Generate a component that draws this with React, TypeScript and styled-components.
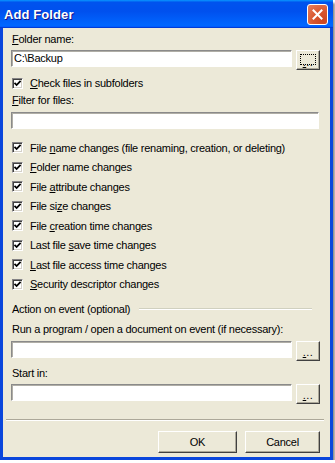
import React from "react";
import styled, { createGlobalStyle } from "styled-components";

const GlobalStyle = createGlobalStyle`
  html, body { margin: 0; padding: 0; background: #ffffff; }
  body { font-family: "Liberation Sans", Arial, sans-serif; }
`;

const Window = styled.div`
  width: 333px;
  height: 460px;
  display: flex;
  flex-direction: column;
  background: #0a46dc;
  box-shadow: 2px 3px 2px rgba(0, 0, 0, 0.45);
`;

const TitleBar = styled.div`
  flex: none;
  height: 28px;
  display: flex;
  align-items: center;
  justify-content: space-between;
  padding: 0 5px 0 4px;
  background: linear-gradient(
    180deg,
    #0997ff,
    #0053ee 8%,
    #0050ee 40%,
    #0066ff 88%,
    #0066ff 93%,
    #005bff 95%,
    #003dd7 96%,
    #003dd7
  );
`;

const Title = styled.span`
  color: #ffffff;
  font: bold 13px "Liberation Sans", Arial, sans-serif;
  text-shadow: 1px 1px 0 #0f1089;
  letter-spacing: 0.1px;
`;

const CloseButton = styled.div`
  width: 21px;
  height: 21px;
  box-sizing: border-box;
  border: 1px solid #ffffff;
  border-radius: 3px;
  background: radial-gradient(circle at 80% 85%, #cc4622 0%, #d8562f 45%, #e7805f 100%);
  display: flex;
  align-items: center;
  justify-content: center;
`;

const Body = styled.div`
  flex: 1;
  margin: 0 3px 3px;
  background: #ece9d8;
  padding: 0 10px 0 8px;
  display: flex;
  flex-direction: column;
  font-size: 11px;
  letter-spacing: -0.25px;
  color: #000000;
`;

const Label = styled.div<{ $mt: number }>`
  margin-top: ${(p) => p.$mt}px;
  margin-left: 1px;
  height: 13px;
  line-height: 13px;
  white-space: nowrap;
`;

const U = styled.span`
  text-decoration: underline;
`;

const FieldRow = styled.div<{ $mt: number }>`
  margin-top: ${(p) => p.$mt}px;
  display: flex;
  align-items: flex-start;
  gap: 4px;
`;

const TextBox = styled.div<{ $mt?: number; $full?: boolean }>`
  margin-top: ${(p) => p.$mt ?? 0}px;
  box-sizing: border-box;
  height: 17px;
  width: ${(p) => (p.$full ? "308px" : "281px")};
  background: #ffffff;
  border-style: solid;
  border-width: 1px;
  border-color: #8a8a8a #ffffff #ffffff #8a8a8a;
  box-shadow: inset 1px 1px 0 #b0aea6;
  padding: 0 2px;
  line-height: 14px;
  white-space: nowrap;
`;

const RaisedButton = styled.div<{ $w: number; $h: number }>`
  box-sizing: border-box;
  width: ${(p) => p.$w}px;
  height: ${(p) => p.$h}px;
  background: #ece9d8;
  border-style: solid;
  border-width: 1px;
  border-color: #ffffff #404040 #404040 #ffffff;
  box-shadow: inset -1px -1px 0 #aca899;
  display: flex;
  align-items: center;
  justify-content: center;
  position: relative;
`;

const Dots = styled.span`
  font-size: 11px;
  line-height: 12px;
  margin-top: 3px;
  letter-spacing: 0.5px;
`;

const FocusRect = styled.div`
  position: absolute;
  inset: 3px 3px 4px 3px;
  border: 1px dotted #000000;
`;

const CheckRow = styled.div<{ $mt?: number; $h?: number }>`
  margin-top: ${(p) => p.$mt ?? 0}px;
  height: ${(p) => p.$h ?? 19.5}px;
  display: flex;
  align-items: center;
  gap: 7px;
  padding-left: 1px;
  white-space: nowrap;
`;

const CheckList = styled.div<{ $mt: number }>`
  margin-top: ${(p) => p.$mt}px;
  display: flex;
  flex-direction: column;
`;

const Box = styled.div`
  flex: none;
  width: 11px;
  height: 11px;
  box-sizing: border-box;
  background: #ffffff;
  border-style: solid;
  border-width: 1px;
  border-color: #848284 #ffffff #ffffff #848284;
  box-shadow: inset 1px 1px 0 #404040, inset -1px -1px 0 #d4d0c8;
  display: flex;
  align-items: center;
  justify-content: center;
`;

const GroupHeader = styled.div<{ $mt: number }>`
  margin-top: ${(p) => p.$mt}px;
  height: 14px;
  display: flex;
  align-items: center;
  gap: 9px;
  padding-left: 1px;
  padding-right: 8px;
  white-space: nowrap;
`;

const EtchedLine = styled.div`
  flex: 1;
  height: 1px;
  margin-top: 1px;
  background: #d0d0bf;
  border-bottom: 1px solid #ffffff;
`;

const Separator = styled.div<{ $mt: number }>`
  margin: ${(p) => p.$mt}px -4px 0 -5px;
  height: 1px;
  background: #aca899;
  border-bottom: 1px solid #ffffff;
`;

const ButtonBar = styled.div<{ $mt: number }>`
  margin-top: ${(p) => p.$mt}px;
  display: flex;
  justify-content: flex-end;
  gap: 8px;
`;

const ButtonText = styled.span`
  font-size: 11px;
`;

const Check = () => (
  <Box>
    <svg width="9" height="9" viewBox="0 0 9 9">
      <path d="M1.5 3.8 L3.6 6 L7.6 1.8" fill="none" stroke="#000" strokeWidth="1.8" />
    </svg>
  </Box>
);

const BrowseButton = ({ focused }: { focused?: boolean }) => (
  <RaisedButton $w={24} $h={20}>
    {focused && <FocusRect />}
    <Dots>
      <U>.</U>..
    </Dots>
  </RaisedButton>
);

const items: [string, string, string][] = [
  ["File ", "n", "ame changes (file renaming, creation, or deleting)"],
  ["", "F", "older name changes"],
  ["File ", "a", "ttribute changes"],
  ["File si", "z", "e changes"],
  ["File ", "c", "reation time changes"],
  ["Last file ", "s", "ave time changes"],
  ["", "L", "ast file access time changes"],
  ["", "S", "ecurity descriptor changes"],
];

export default function App() {
  return (
    <>
      <GlobalStyle />
      <Window>
        <TitleBar>
          <Title>Add Folder</Title>
          <CloseButton>
            <svg width="11" height="11" viewBox="0 0 11 11">
              <path d="M1.5 1.5 L9.5 9.5 M9.5 1.5 L1.5 9.5" stroke="#fff" strokeWidth="2" strokeLinecap="square" />
            </svg>
          </CloseButton>
        </TitleBar>
        <Body>
          <Label $mt={5}>
            <U>F</U>older name:
          </Label>
          <FieldRow $mt={4}>
            <TextBox>C:\Backup</TextBox>
            <BrowseButton focused />
          </FieldRow>
          <CheckRow $mt={6.5} $h={13}>
            <Check />
            <span>
              <U>C</U>heck files in subfolders
            </span>
          </CheckRow>
          <Label $mt={4.5}>
            <U>F</U>ilter for files:
          </Label>
          <TextBox $mt={4.5} $full />
          <CheckList $mt={9.25}>
            {items.map(([a, u, b]) => (
              <CheckRow key={a + u + b}>
                <Check />
                <span>
                  {a}
                  <U>{u}</U>
                  {b}
                </span>
              </CheckRow>
            ))}
          </CheckList>
          <GroupHeader $mt={7.75}>
            <span>Action on event (optional)</span>
            <EtchedLine />
          </GroupHeader>
          <Label $mt={7.5}>Run a program / open a document on event (if necessary):</Label>
          <FieldRow $mt={4.5}>
            <TextBox />
            <BrowseButton />
          </FieldRow>
          <Label $mt={6.5}>Start in:</Label>
          <FieldRow $mt={3.5}>
            <TextBox />
            <BrowseButton />
          </FieldRow>
          <Separator $mt={15} />
          <ButtonBar $mt={10}>
            <RaisedButton $w={79} $h={22}>
              <ButtonText>OK</ButtonText>
            </RaisedButton>
            <RaisedButton $w={75} $h={22}>
              <ButtonText>Cancel</ButtonText>
            </RaisedButton>
          </ButtonBar>
        </Body>
      </Window>
    </>
  );
}
